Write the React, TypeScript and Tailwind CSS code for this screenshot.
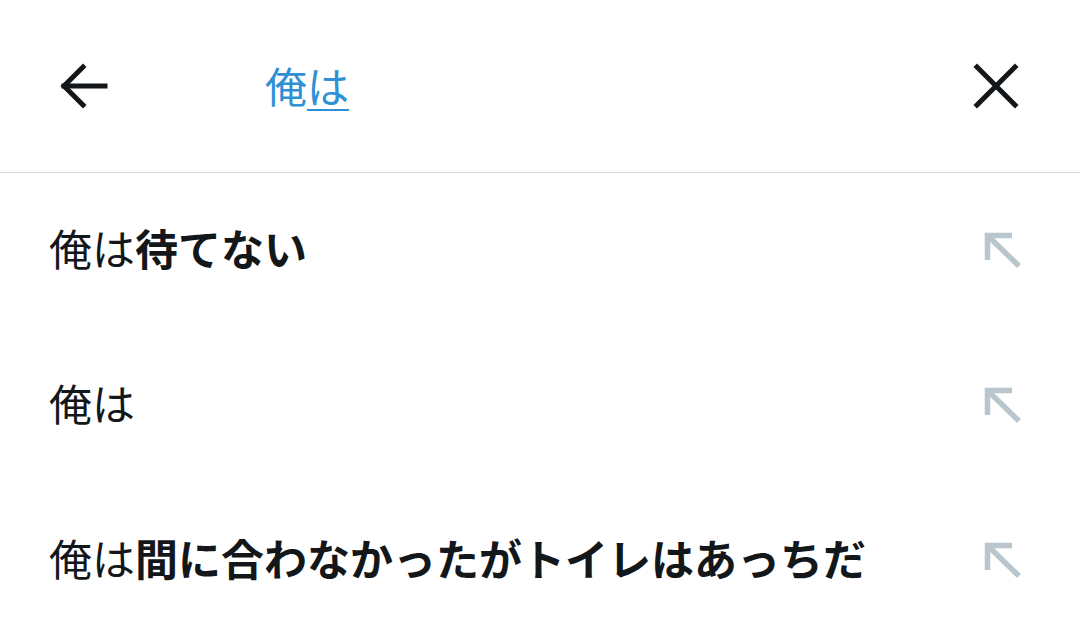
import React from 'react';

const font = { fontFamily: '"Noto Sans CJK JP", "Noto Sans", sans-serif' };

const BackArrow = () => (
  <svg width="50" height="48" viewBox="0 0 50 48" fill="none" stroke="#14171a" strokeWidth="5" strokeLinecap="square">
    <path d="M5 24 H46" />
    <path d="M24 5 L5 24 L24 43" strokeLinejoin="miter" />
  </svg>
);

const CloseIcon = () => (
  <svg width="48" height="48" viewBox="0 0 48 48" fill="none" stroke="#14171a" strokeWidth="5" strokeLinecap="square">
    <path d="M5 5 L43 43 M43 5 L5 43" />
  </svg>
);

const FillArrow = () => (
  <svg width="40" height="40" viewBox="0 0 40 40" fill="none" stroke="#bac6ce" strokeWidth="5.5">
    <path d="M4.5 29 V4.5 H29" strokeLinejoin="miter" />
    <path d="M4.5 4.5 L36 35" />
  </svg>
);

const suggestions: { prefix: string; rest: string }[] = [
  { prefix: '俺は', rest: '待てない' },
  { prefix: '俺は', rest: '' },
  { prefix: '俺は', rest: '間に合わなかったがトイレはあっちだ' },
];

export default function App() {
  return (
    <div className="w-[1080px] h-[639px] bg-white overflow-hidden" style={font}>
      <div className="h-[173px] flex items-center border-b border-[#d6dadd]">
        <div className="w-[265px] pl-[59px] flex items-center">
          <BackArrow />
        </div>
        <div className="flex-1 text-[42px] leading-none text-[#2f91d3] pb-[3px]">
          俺<span className="underline decoration-2 underline-offset-[6px]">は</span>
        </div>
        <div className="pr-[60px] flex items-center">
          <CloseIcon />
        </div>
      </div>
      {suggestions.map((s, i) => (
        <div key={i} className="h-[155px] flex items-center justify-between pl-[49px] pr-[57px]">
          <div className="text-[43px] leading-none text-[#14171a] pb-[6px]">
            {s.prefix}
            <span className="font-bold">{s.rest}</span>
          </div>
          <FillArrow />
        </div>
      ))}
    </div>
  );
}
